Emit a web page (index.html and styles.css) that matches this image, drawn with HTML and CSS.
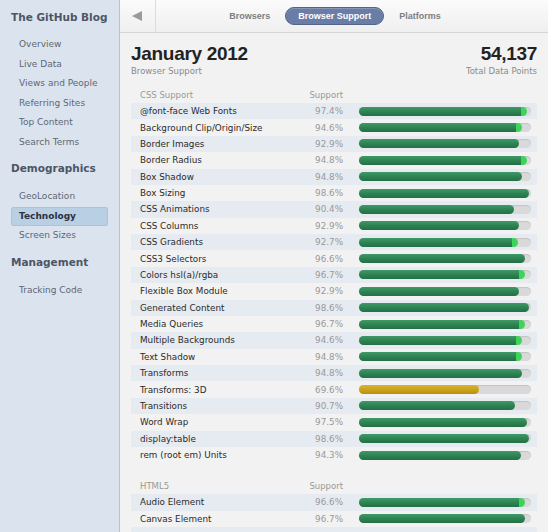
FILE: index.html
```html
<!DOCTYPE html>
<html>
<head>
<meta charset="utf-8">
<link rel="stylesheet" href="styles.css">
</head>
<body>
<aside class="sidebar">
  <h1 class="brand">The GitHub Blog</h1>
  <ul class="nav">
    <li>Overview</li>
    <li>Live Data</li>
    <li>Views and People</li>
    <li>Referring Sites</li>
    <li>Top Content</li>
    <li>Search Terms</li>
  </ul>
  <h2 class="section">Demographics</h2>
  <ul class="nav">
    <li>GeoLocation</li>
    <li class="active">Technology</li>
    <li>Screen Sizes</li>
  </ul>
  <h2 class="section">Management</h2>
  <ul class="nav">
    <li>Tracking Code</li>
  </ul>
</aside>
<main class="main">
  <header class="topbar">
    <div class="back"><span class="arrow"></span></div>
    <nav class="tabs">
      <span class="tab">Browsers</span>
      <span class="tab selected">Browser Support</span>
      <span class="tab">Platforms</span>
    </nav>
  </header>
  <section class="content">
    <div class="titlebar">
      <div>
        <div class="big">January 2012</div>
        <div class="sub">Browser Support</div>
      </div>
      <div class="right">
        <div class="big">54,137</div>
        <div class="sub">Total Data Points</div>
      </div>
    </div>

    <div class="table">
      <div class="thead"><span class="name">CSS Support</span><span class="pct">Support</span></div>
      <div class="row"><span class="name">@font-face Web Fonts</span><span class="pct">97.4%</span><span class="track"><span class="fill tip" style="width:97.4%"></span></span></div>
      <div class="row"><span class="name">Background Clip/Origin/Size</span><span class="pct">94.6%</span><span class="track"><span class="fill tip" style="width:94.6%"></span></span></div>
      <div class="row"><span class="name">Border Images</span><span class="pct">92.9%</span><span class="track"><span class="fill" style="width:92.9%"></span></span></div>
      <div class="row"><span class="name">Border Radius</span><span class="pct">94.8%</span><span class="track"><span class="fill tip" style="width:97.4%"></span></span></div>
      <div class="row"><span class="name">Box Shadow</span><span class="pct">94.8%</span><span class="track"><span class="fill" style="width:94.8%"></span></span></div>
      <div class="row"><span class="name">Box Sizing</span><span class="pct">98.6%</span><span class="track"><span class="fill" style="width:98.6%"></span></span></div>
      <div class="row"><span class="name">CSS Animations</span><span class="pct">90.4%</span><span class="track"><span class="fill" style="width:90.4%"></span></span></div>
      <div class="row"><span class="name">CSS Columns</span><span class="pct">92.9%</span><span class="track"><span class="fill" style="width:92.9%"></span></span></div>
      <div class="row"><span class="name">CSS Gradients</span><span class="pct">92.7%</span><span class="track"><span class="fill tip" style="width:92.7%"></span></span></div>
      <div class="row"><span class="name">CSS3 Selectors</span><span class="pct">96.6%</span><span class="track"><span class="fill" style="width:96.6%"></span></span></div>
      <div class="row"><span class="name">Colors hsl(a)/rgba</span><span class="pct">96.7%</span><span class="track"><span class="fill tip" style="width:96.7%"></span></span></div>
      <div class="row"><span class="name">Flexible Box Module</span><span class="pct">92.9%</span><span class="track"><span class="fill" style="width:92.9%"></span></span></div>
      <div class="row"><span class="name">Generated Content</span><span class="pct">98.6%</span><span class="track"><span class="fill" style="width:98.6%"></span></span></div>
      <div class="row"><span class="name">Media Queries</span><span class="pct">96.7%</span><span class="track"><span class="fill tip" style="width:96.7%"></span></span></div>
      <div class="row"><span class="name">Multiple Backgrounds</span><span class="pct">94.6%</span><span class="track"><span class="fill tip" style="width:94.6%"></span></span></div>
      <div class="row"><span class="name">Text Shadow</span><span class="pct">94.8%</span><span class="track"><span class="fill tip" style="width:94.8%"></span></span></div>
      <div class="row"><span class="name">Transforms</span><span class="pct">94.8%</span><span class="track"><span class="fill" style="width:94.8%"></span></span></div>
      <div class="row"><span class="name">Transforms: 3D</span><span class="pct">69.6%</span><span class="track"><span class="fill warn" style="width:69.6%"></span></span></div>
      <div class="row"><span class="name">Transitions</span><span class="pct">90.7%</span><span class="track"><span class="fill" style="width:90.7%"></span></span></div>
      <div class="row"><span class="name">Word Wrap</span><span class="pct">97.5%</span><span class="track"><span class="fill" style="width:97.5%"></span></span></div>
      <div class="row"><span class="name">display:table</span><span class="pct">98.6%</span><span class="track"><span class="fill" style="width:98.6%"></span></span></div>
      <div class="row"><span class="name">rem (root em) Units</span><span class="pct">94.3%</span><span class="track"><span class="fill" style="width:94.3%"></span></span></div>
    </div>

    <div class="table second">
      <div class="thead"><span class="name">HTML5</span><span class="pct">Support</span></div>
      <div class="row"><span class="name">Audio Element</span><span class="pct">96.6%</span><span class="track"><span class="fill tip" style="width:96.6%"></span></span></div>
      <div class="row"><span class="name">Canvas Element</span><span class="pct">96.7%</span><span class="track"><span class="fill" style="width:96.7%"></span></span></div>
      <div class="row"></div>
    </div>
  </section>
</main>
</body>
</html>
```
FILE: styles.css
```css
* { box-sizing: border-box; }
html, body { margin: 0; padding: 0; }
body {
  width: 548px;
  height: 532px;
  overflow: hidden;
  display: flex;
  font-family: "DejaVu Sans", "Liberation Sans", sans-serif;
  background: #f2f2f2;
}
.sidebar {
  width: 120px;
  flex: none;
  background: #dbe4ee;
  border-right: 1px solid #b9c3ce;
  padding: 11px 11px 0 11px;
}
.brand {
  margin: 0 0 11px 0;
  font-size: 10.5px;
  font-weight: bold;
  color: #4d5566;
  line-height: 13px;
}
.section {
  margin: 10px 0 12px 0;
  font-size: 10.5px;
  font-weight: bold;
  color: #4d5566;
  line-height: 13px;
}
.nav {
  list-style: none;
  margin: 0;
  padding: 0;
}
.nav li {
  font-size: 9px;
  color: #5e6675;
  height: 19.5px;
  line-height: 19.5px;
  padding-left: 8px;
  border-radius: 3px;
}
.nav li.active {
  background: #b9cfe4;
  color: #2a3140;
  font-weight: bold;
  box-shadow: inset 0 0 0 1px #adc3da;
}
.main {
  flex: 1;
  display: flex;
  flex-direction: column;
  min-width: 0;
}
.topbar {
  height: 33px;
  flex: none;
  display: flex;
  background: linear-gradient(#fbfbfb, #efefef);
  border-bottom: 1px solid #d6d6d6;
}
.back {
  width: 36px;
  border-right: 1px solid #dcdcdc;
  display: flex;
  align-items: center;
  justify-content: center;
}
.arrow {
  width: 0;
  height: 0;
  border-top: 5.5px solid transparent;
  border-bottom: 5.5px solid transparent;
  border-right: 10px solid #9a9a9a;
  margin-right: 2px;
}
.tabs {
  flex: 1;
  display: flex;
  justify-content: center;
  align-items: center;
  gap: 7px;
  padding-right: 34px;
}
.tab {
  font-family: "Liberation Sans", sans-serif;
  font-size: 9px;
  font-weight: bold;
  color: #7b7f86;
  padding: 4px 8px;
  border-radius: 10px;
}
.tab.selected {
  background: #6a7da6;
  color: #fff;
  border: 1px solid #53648a;
  padding: 3px 12px;
  box-shadow: inset 0 1px 0 rgba(255,255,255,0.2);
}
.content {
  padding: 9px 11px 0 11px;
}
.titlebar {
  display: flex;
  justify-content: space-between;
  margin-bottom: 11px;
}
.right { text-align: right; }
.big {
  font-family: "Liberation Sans", sans-serif;
  font-size: 19px;
  letter-spacing: -0.3px;
  font-weight: bold;
  color: #222;
  line-height: 24px;
}
.sub {
  font-size: 8.5px;
  color: #8a8a8a;
  line-height: 10px;
}
.table { display: flex; flex-direction: column; }
.second { margin-top: 15px; }
.thead, .row {
  display: grid;
  grid-template-columns: 1fr 50px 194px;
  align-items: center;
}
.thead {
  height: 16px;
  font-size: 8.5px;
  color: #999;
}
.row {
  height: 16.38px;
  font-size: 8.8px;
  color: #2a2a2a;
}
.row:nth-child(even) { background: #e6ebf1; }
.name { padding-left: 9px; white-space: nowrap; }
.pct { text-align: right; color: #999; }
.track {
  margin-left: 16px;
  margin-right: 6px;
  height: 9px;
  background: #d9d9d9;
  border-radius: 5px;
  box-shadow: inset 0 1px 1px rgba(0,0,0,0.1);
  display: block;
}
.fill {
  display: block;
  height: 100%;
  border-radius: 5px;
  background: linear-gradient(#3e9a66, #2b7f50 60%, #256f46);
}
.fill.tip {
  background: linear-gradient(90deg, transparent calc(100% - 6px), #3ed45a calc(100% - 6px)), linear-gradient(#3e9a66, #2b7f50 60%, #256f46);
}
.fill.warn {
  background: linear-gradient(#d9b431, #c9a01a 60%, #b88f10);
}
```
